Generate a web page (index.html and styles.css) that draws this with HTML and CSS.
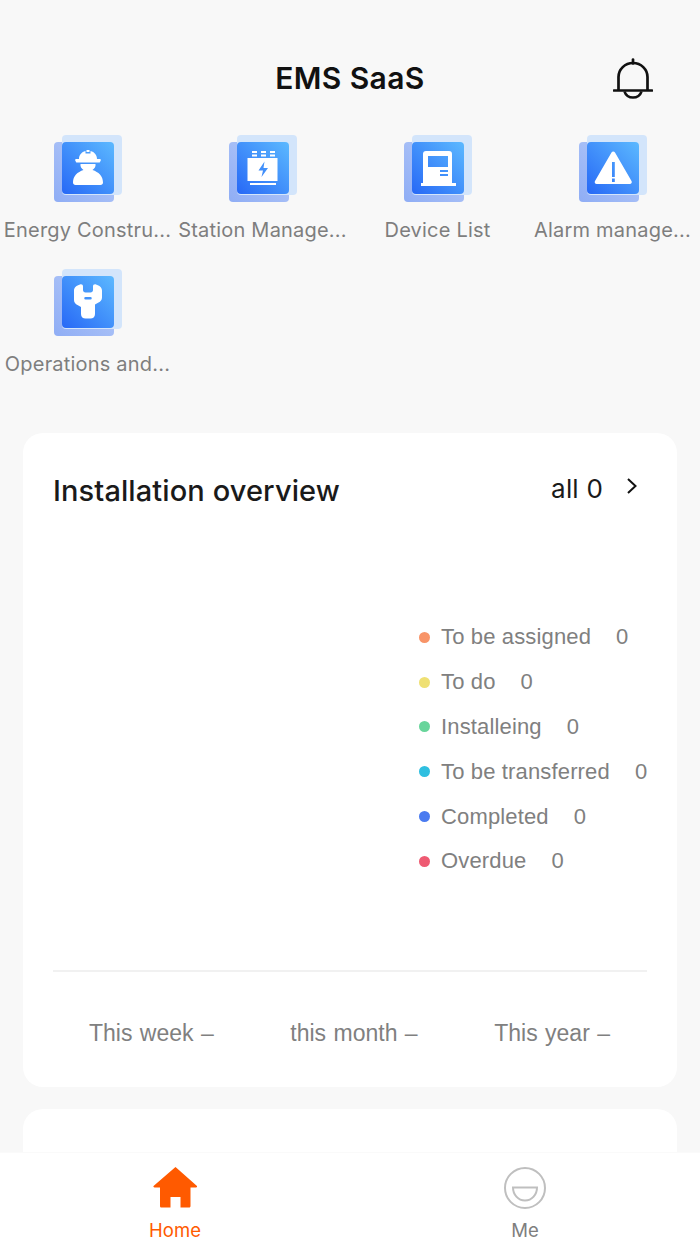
FILE: index.html
```html
<!DOCTYPE html>
<html lang="en">
<head>
<meta charset="utf-8">
<title>EMS SaaS</title>
<link rel="stylesheet" href="styles.css">
</head>
<body>
<div class="app">
  <main class="main">
    <header class="header">
      <h1 class="title">EMS SaaS</h1>
      <svg class="bell" viewBox="0 0 40 42" fill="none" stroke="#111" stroke-width="2.700">
        <path d="M20 1.500v4" stroke-linecap="round"/>
        <path d="M5.500 32.500V19a14.500 14 0 0 1 29 0v13.500"/>
        <path d="M1 32.500h38" stroke-linecap="round"/>
        <path d="M11.500 33.500c1 3.500 4.500 6 8.500 6s7.500-2.500 8.500-6"/>
      </svg>
    </header>
    <nav class="grid">
      <a class="item">
        <span class="tile"><span class="tile-back"></span><span class="tile-front"></span>
          <span class="tile-mid"><svg class="glyph" viewBox="0 0 52 52" fill="#fff">
            <path fill-rule="evenodd" d="M17 17c0-4 2.500-7 6.500-8v2.500h5V9c4 1 6.500 4 6.500 8h3c.8 0 1.200 1 .5 2l-.8 1.500H14.300l-.8-1.500c-.7-1-.3-2 .5-2zM24.500 8h3v2h-3z"/>
            <path d="M18.500 22h15c.5 2.500-1 4.500-3 6 6 2 10.500 6 10.500 12.500 0 1.500-1 2.500-2.500 2.500h-25c-1.500 0-2.500-1-2.500-2.500 0-6.500 4.500-10.500 10.500-12.500-2-1.500-3.500-3.500-3-6z"/>
          </svg></span>
        </span>
        <span class="label">Energy Constru...</span>
      </a>
      <a class="item">
        <span class="tile"><span class="tile-back"></span><span class="tile-front"></span>
          <span class="tile-mid"><svg class="glyph" viewBox="0 0 52 52" fill="#fff">
            <path d="M15 9h5v2h-5zM24 9h5v2h-5zM33 9h5v2h-5zM15 12.500h5v2h-5zM24 12.500h5v2h-5zM33 12.500h5v2h-5z"/>
            <path fill-rule="evenodd" d="M10.500 16h30v23h-30zM27.500 19.500l-6 9h4.500l-1.500 6.500 6.500-9h-4.500z"/>
            <path d="M13 41h26v2H13z"/>
          </svg></span>
        </span>
        <span class="label">Station Manage...</span>
      </a>
      <a class="item">
        <span class="tile"><span class="tile-back"></span><span class="tile-front"></span>
          <span class="tile-mid"><svg class="glyph" viewBox="0 0 52 52" fill="#fff">
            <path fill-rule="evenodd" d="M11 12a3 3 0 0 1 3-3h23a3 3 0 0 1 3 3v29h4v3H9v-3h2zM16 14v11h20V14zM28 28v2h8v-2zM28 32v2h8v-2z"/>
          </svg></span>
        </span>
        <span class="label">Device List</span>
      </a>
      <a class="item">
        <span class="tile"><span class="tile-back"></span><span class="tile-front"></span>
          <span class="tile-mid"><svg class="glyph" viewBox="0 0 52 52" fill="#fff">
            <path fill-rule="evenodd" d="M24.500 10.500c.8-1.500 2.700-1.500 3.500 0l16.500 28.500c.8 1.500 0 3-1.700 3H9.700c-1.700 0-2.500-1.500-1.700-3zM25 20v15h2.800V20zM25 36.500v3.500h2.800v-3.500z"/>
          </svg></span>
        </span>
        <span class="label">Alarm manage...</span>
      </a>
      <a class="item">
        <span class="tile"><span class="tile-back"></span><span class="tile-front"></span>
          <span class="tile-mid"><svg class="glyph" viewBox="0 0 52 52" fill="#fff">
            <path fill-rule="evenodd" d="M18 8.500c2-.5 3 .5 3 2v3.500c0 1.500 1 2.500 2.500 2.500h5c1.500 0 2.500-1 2.500-2.500v-3.500c0-1.500 1-2.500 3-2 3.500 1 6 3 6 6v7c0 2.500-1.500 4-3.500 5l-3.500 2v9.500c0 3-2 4.500-4.500 4.500h-5c-2.500 0-4.500-1.500-4.500-4.500V31l-3.500-2c-2-1-3.500-2.500-3.500-5v-9.500c0-3 2.500-5 6-6zM23.500 21a1 1 0 0 0 0 2.500h5a1 1 0 0 0 0-2.500z"/>
          </svg></span>
        </span>
        <span class="label">Operations and...</span>
      </a>
    </nav>
    <section class="card overview">
      <div class="card-head">
        <h2 class="card-title">Installation overview</h2>
        <div class="total">all 0
          <svg class="chev" viewBox="0 0 12 18" fill="none" stroke="#111" stroke-width="2"><path d="M2 2l7.500 7L2 16"/></svg>
        </div>
      </div>
      <ul class="legend">
        <li class="legend-row"><i class="dot dot-orange"></i><span>To be assigned</span><span class="num">0</span></li>
        <li class="legend-row"><i class="dot dot-yellow"></i><span>To do</span><span class="num">0</span></li>
        <li class="legend-row"><i class="dot dot-green"></i><span>Installeing</span><span class="num">0</span></li>
        <li class="legend-row"><i class="dot dot-cyan"></i><span>To be transferred</span><span class="num">0</span></li>
        <li class="legend-row"><i class="dot dot-blue"></i><span>Completed</span><span class="num">0</span></li>
        <li class="legend-row"><i class="dot dot-red"></i><span>Overdue</span><span class="num">0</span></li>
      </ul>
      <div class="stats">
        <span>This week –</span>
        <span>this month –</span>
        <span>This year –</span>
      </div>
    </section>
    <section class="card next"></section>
  </main>
  <footer class="tabbar">
    <a class="tab tab-on">
      <svg class="tab-icon" viewBox="0 0 44 42" fill="#ff5a00"><path d="M22.500 0L43.700 18.700c.8.800.5 1.800-.7 1.800h-5.500V39c0 1-.7 1.500-1.500 1.500H27.500V30h-10v10.500H8.500C7.700 40.500 7 40 7 39V20.500H1.500c-1.200 0-1.500-1-.7-1.800z"/></svg>
      <span>Home</span>
    </a>
    <a class="tab">
      <svg class="tab-icon" viewBox="0 0 42 42" fill="none" stroke="#bfbfbf" stroke-width="2"><circle cx="21" cy="21" r="20"/><path d="M9 20.500h24c0 7-5 13-12 13s-12-6-12-13z"/></svg>
      <span>Me</span>
    </a>
  </footer>
</div>
</body>
</html>
```

FILE: styles.css
```css
* { box-sizing: border-box; }
html, body { margin: 0; height: 100%; }
body { background: #f8f8f8; font-family: Inter, "Liberation Sans", sans-serif; overflow: hidden; }
.app { height: 1244px; display: flex; flex-direction: column; }
.main { flex: 1; min-height: 0; overflow: hidden; }

.header { height: 135px; padding-top: 58px; display: flex; justify-content: center; position: relative; }
.title { margin: 0; font-size: 30px; line-height: 40px; font-weight: 600; color: #111; letter-spacing: .4px; }
.bell { position: absolute; left: 613px; top: 58px; width: 40px; height: 42px; }

.grid { display: grid; grid-template-columns: repeat(4, 175px); grid-auto-rows: 134px; height: 298px; }
.item { display: flex; flex-direction: column; align-items: center; }
.tile { position: relative; width: 68px; height: 67px; flex: none; }
.tile-back { position: absolute; left: 0; top: 7px; width: 60px; height: 60px; border-radius: 4px; background: linear-gradient(45deg, #8fadf5, #b9cdf8); }
.tile-front { position: absolute; left: 8px; top: 0; width: 60px; height: 60px; border-radius: 4px; background: #d3e5fb; }
.tile-mid { position: absolute; left: 8px; top: 7px; width: 52px; height: 52px; border-radius: 4px; background: linear-gradient(45deg, #2768f6, #5cb9ff); }
.glyph { display: block; width: 52px; height: 52px; }
.label { margin-top: 15px; font-size: 20px; line-height: 26px; color: #7e7e7e; text-align: center; white-space: nowrap; letter-spacing: .2px; }

.card { margin: 0 23px; background: #fff; border-radius: 20px; }
.overview { height: 654px; padding: 0 30px; display: flex; flex-direction: column; }
.next { height: 120px; margin-top: 22px; }
.card-head { display: flex; justify-content: space-between; align-items: flex-start; padding-top: 38px; height: 182px; }
.card-title { margin: 0; font-size: 29px; line-height: 40px; font-weight: 500; color: #1a1a1a; letter-spacing: .1px; }
.total { display: flex; align-items: center; font-size: 26px; line-height: 36px; color: #1a1a1a; padding-right: 9px; letter-spacing: .2px; }
.chev { width: 12px; height: 18px; margin-left: 23px; margin-top: -6px; }

.legend { list-style: none; margin: 0; padding: 0 0 0 366px; height: 355px; font-family: "Liberation Sans", sans-serif; font-size: 22px; letter-spacing: .15px; color: #808080; }
.legend-row { height: 44.800px; display: flex; align-items: center; white-space: nowrap; }
.dot { width: 11px; height: 11px; border-radius: 50%; margin-right: 11px; flex: none; }
.num { margin-left: 25px; }
.dot-orange { background: #f89468; }
.dot-yellow { background: #efe073; }
.dot-green { background: #68d59b; }
.dot-cyan { background: #2fbfe0; }
.dot-blue { background: #4a7bf0; }
.dot-red { background: #ee5a72; }

.stats { border-top: 2px solid #f1f1f1; flex: 1; display: flex; justify-content: space-between; padding: 47px 37px 0 36px; font-family: "Liberation Sans", sans-serif; font-size: 23px; word-spacing: 1px; line-height: 28px; color: #808080; }

.tabbar { height: 92px; flex: none; background: #fff; border-top: 1px solid #fafafa; display: grid; grid-template-columns: 350px 350px; }
.tab { display: flex; flex-direction: column; align-items: center; font-size: 18.500px; line-height: 24px; color: #7e7e7e; padding-top: 14px; }
.tab-on { color: #ff5a00; }
.tab-icon { width: 44px; height: 42px; margin-bottom: 9px; }
```
